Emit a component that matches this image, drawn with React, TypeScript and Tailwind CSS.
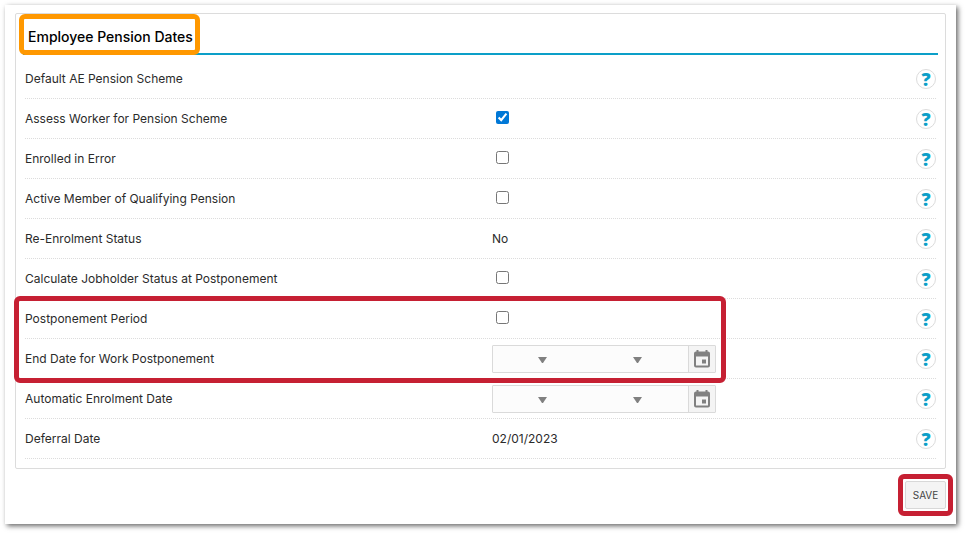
import type { ReactNode } from "react";

function HelpButton({ topic }: { topic: string }) {
  return (
    <button
      type="button"
      aria-label={`Help: ${topic}`}
      className="flex size-5 items-center justify-center rounded-full border border-[#dcdcdc] bg-white font-['Noto_Sans',sans-serif] text-lg leading-none font-black text-[#0c9fc8]"
    >
      ?
    </button>
  );
}

function Row({
  label,
  htmlFor,
  children,
}: {
  label: string;
  htmlFor?: string;
  children?: ReactNode;
}) {
  return (
    <div className="grid h-10 grid-cols-[467px_1fr_auto] items-center border-b border-dotted border-[#dcdcdc]">
      {htmlFor ? <label htmlFor={htmlFor}>{label}</label> : <span>{label}</span>}
      <div className="flex items-center">{children}</div>
      <HelpButton topic={label} />
    </div>
  );
}

function CheckRow({
  id,
  label,
  checked = false,
}: {
  id: string;
  label: string;
  checked?: boolean;
}) {
  return (
    <Row label={label} htmlFor={id}>
      <input
        id={id}
        type="checkbox"
        defaultChecked={checked}
        className="mb-[3px] ml-1 size-[13px] accent-[#0078d7]"
      />
    </Row>
  );
}

function Caret() {
  return (
    <svg
      viewBox="0 0 9 6"
      className="pointer-events-none absolute top-[11px] right-0 h-[6px] w-[9px] fill-[#808080]"
      aria-hidden="true"
    >
      <path d="M0 0h9L5 6H4z" />
    </svg>
  );
}

function DateRow({ id, label }: { id: string; label: string }) {
  return (
    <Row label={label} htmlFor={id}>
      <div className="flex h-7 w-56 rounded-[1px] border border-[#dadada] bg-[#fcfcfc]">
        <div className="relative w-[54px]">
          <select id={id} className="h-full w-full appearance-none pl-2">
            <option value=""></option>
          </select>
          <Caret />
        </div>
        <div className="relative w-[95px]">
          <select aria-label={`${label} month`} className="h-full w-full appearance-none pl-2">
            <option value=""></option>
          </select>
          <Caret />
        </div>
        <input
          type="text"
          aria-label={`${label} year`}
          className="min-w-0 flex-1 bg-transparent px-1"
        />
        <button
          type="button"
          aria-label={`Pick ${label}`}
          className="flex w-[27px] items-center justify-center border-l border-[#dadada] bg-[#f4f4f4]"
        >
          <svg viewBox="0 0 16 18" className="h-[18px] w-4" aria-hidden="true">
            <path
              fill="#808080"
              fillRule="evenodd"
              d="M2.500 0H4.500v1.500h7V0h2v1.500h.5a2 2 0 0 1 2 2V15.500a2 2 0 0 1-2 2H2a2 2 0 0 1-2-2V3.500a2 2 0 0 1 2-2h.5zM2 6.500v9h12v-9z"
            />
            <path fill="#808080" d="M8 9.500h4v4H8z" />
          </svg>
        </button>
      </div>
    </Row>
  );
}

export default function App() {
  return (
    <div className="bg-white pt-[5px] pr-[9px] pb-[9px] pl-[5px] font-[Inter,sans-serif] text-xs leading-5 text-[#2b2b2b]">
      <main className="bg-white px-[10px] pt-2 pb-[15px] shadow-[2px_2px_5px_0px_rgba(0,0,0,0.6)]">
        <section className="rounded-[2px] border border-[#dcdcdc] px-[7px] pb-[9px]">
          <div className="relative h-[41px] border-b-2 border-[#0c9fc8] pt-[13px] pl-[5px]">
            <h1 className="text-sm leading-5 font-medium text-black">Employee Pension Dates</h1>
            <div className="pointer-events-none absolute top-0 -left-1 h-[41px] w-[181px] rounded-md border-[5px] border-[#ff9800]" />
          </div>

          <div className="mx-[2px] mt-1">
            <Row label="Default AE Pension Scheme" />
            <CheckRow id="assess" label="Assess Worker for Pension Scheme" checked />
            <CheckRow id="error" label="Enrolled in Error" />
            <CheckRow id="active" label="Active Member of Qualifying Pension" />
            <Row label="Re-Enrolment Status">No</Row>
            <CheckRow id="jobholder" label="Calculate Jobholder Status at Postponement" />
            <div className="relative">
              <CheckRow id="postponement" label="Postponement Period" />
              <DateRow id="end-date" label="End Date for Work Postponement" />
              <div className="pointer-events-none absolute -top-[3px] -bottom-1 -left-[11px] w-[712px] rounded-md border-[5px] border-[#c62033]" />
            </div>
            <DateRow id="enrolment-date" label="Automatic Enrolment Date" />
            <Row label="Deferral Date">02/01/2023</Row>
          </div>
        </section>

        <div className="mt-3 flex justify-end">
          <div className="relative">
            <button
              type="button"
              className="block h-7 w-[41px] rounded-[2px] border border-[#d8d8d8] bg-[#f4f4f4] text-[10px] text-[#444]"
            >
              SAVE
            </button>
            <div className="pointer-events-none absolute -inset-[7px] rounded-md border-[5px] border-[#c62033]" />
          </div>
        </div>
      </main>
    </div>
  );
}
